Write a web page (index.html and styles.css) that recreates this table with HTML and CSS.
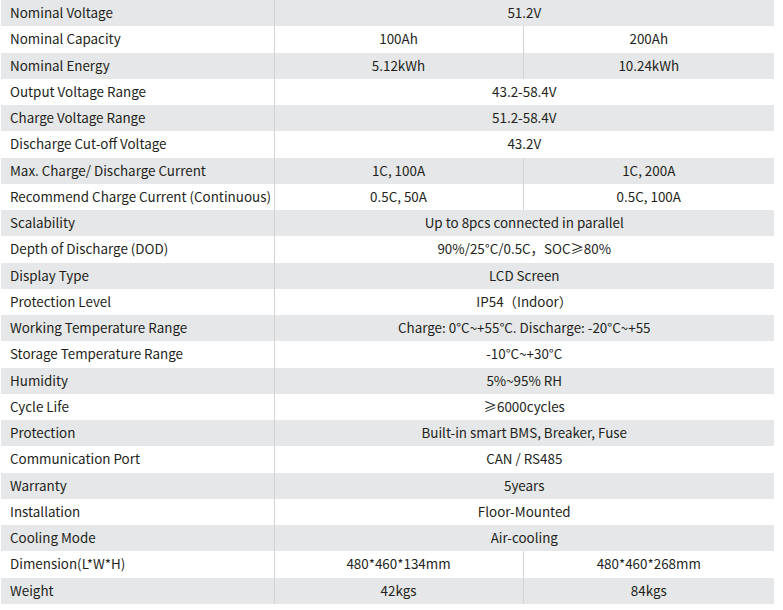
FILE: index.html
```html
<!DOCTYPE html>
<html>
<head>
<meta charset="utf-8">
<link rel="stylesheet" href="styles.css">
</head>
<body>
<table class="spec">
<colgroup><col class="c1"><col class="c2"><col class="c3"></colgroup>
<tbody>
<tr class="g"><td>Nominal Voltage</td><td colspan="2">51.2V</td></tr>
<tr><td>Nominal Capacity</td><td>100Ah</td><td>200Ah</td></tr>
<tr class="g"><td>Nominal Energy</td><td>5.12kWh</td><td>10.24kWh</td></tr>
<tr><td>Output Voltage Range</td><td colspan="2">43.2-58.4V</td></tr>
<tr class="g"><td>Charge Voltage Range</td><td colspan="2">51.2-58.4V</td></tr>
<tr><td>Discharge Cut-off Voltage</td><td colspan="2">43.2V</td></tr>
<tr class="g"><td>Max. Charge/ Discharge Current</td><td>1C, 100A</td><td>1C, 200A</td></tr>
<tr><td>Recommend Charge Current (Continuous)</td><td>0.5C, 50A</td><td>0.5C, 100A</td></tr>
<tr class="g"><td>Scalability</td><td colspan="2">Up to 8pcs connected in parallel</td></tr>
<tr><td>Depth of Discharge (DOD)</td><td colspan="2">90%/25°C/0.5C，SOC≥80%</td></tr>
<tr class="g"><td>Display Type</td><td colspan="2">LCD Screen</td></tr>
<tr><td>Protection Level</td><td colspan="2">IP54（Indoor）</td></tr>
<tr class="g"><td>Working Temperature Range</td><td colspan="2">Charge: 0°C~+55°C. Discharge: -20°C~+55</td></tr>
<tr><td>Storage Temperature Range</td><td colspan="2">-10°C~+30°C</td></tr>
<tr class="g"><td>Humidity</td><td colspan="2">5%~95% RH</td></tr>
<tr><td>Cycle Life</td><td colspan="2">≥6000cycles</td></tr>
<tr class="g"><td>Protection</td><td colspan="2">Built-in smart BMS, Breaker, Fuse</td></tr>
<tr><td>Communication Port</td><td colspan="2">CAN / RS485</td></tr>
<tr class="g"><td>Warranty</td><td colspan="2">5years</td></tr>
<tr><td>Installation</td><td colspan="2">Floor-Mounted</td></tr>
<tr class="g"><td>Cooling Mode</td><td colspan="2">Air-cooling</td></tr>
<tr><td>Dimension(L*W*H)</td><td>480*460*134mm</td><td>480*460*268mm</td></tr>
<tr class="g"><td>Weight</td><td>42kgs</td><td>84kgs</td></tr>
</tbody>
</table>
</body>
</html>
```
FILE: styles.css
```css
html, body {
  margin: 0;
  padding: 0;
  background: #ffffff;
}
body {
  font-family: "Noto Sans CJK SC", "Noto Sans", sans-serif;
  font-size: 13.4px;
  color: #231f20;
}
.spec {
  margin-left: 1px;
  width: 773px;
  border-collapse: collapse;
  table-layout: fixed;
}
.c1 { width: 273px; }
.c2 { width: 249px; }
.c3 { width: 251px; }
.spec tr {
  height: 26.25px;
}
.spec tr.g {
  background: #e6e7e8;
}
.spec td {
  padding: 0 0 2px 0;
  text-align: center;
  white-space: nowrap;
  line-height: 20px;
  border-left: 1px solid #d3d3d3;
}
.spec td:first-child {
  text-align: left;
  padding-left: 9px;
  border-left: none;
}
```
